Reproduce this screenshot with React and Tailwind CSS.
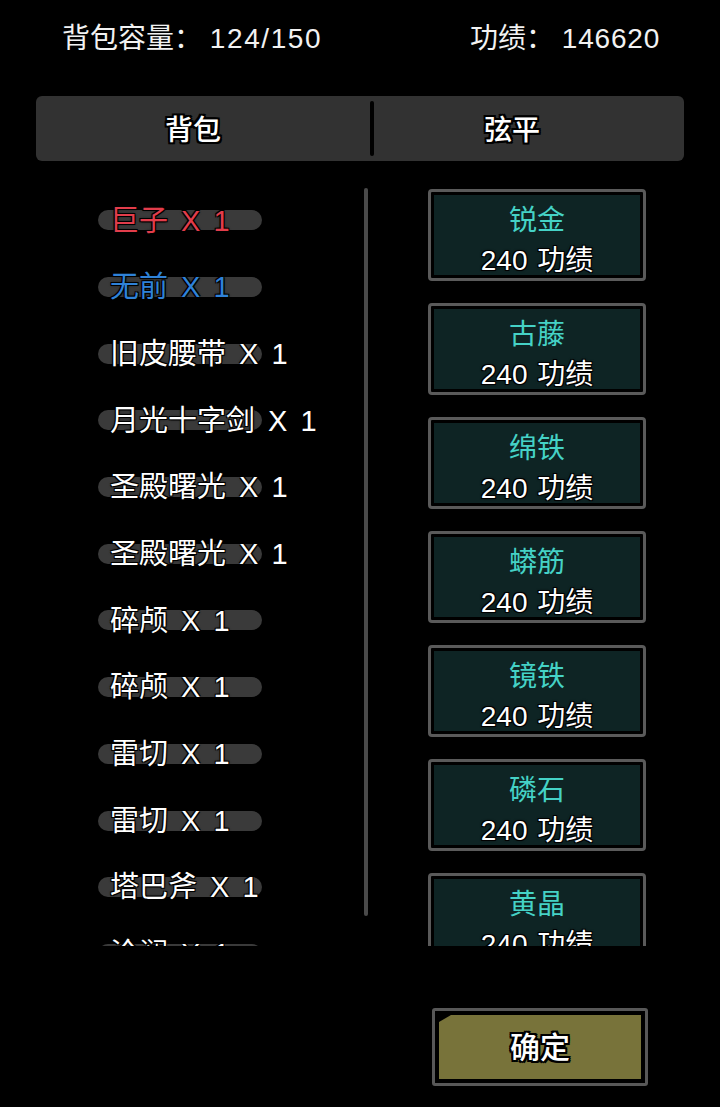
import React from "react";

const items = [
  { name: "巨子", color: "text-[#e23d4b]" },
  { name: "无前", color: "text-[#2f82d8]" },
  { name: "旧皮腰带", color: "text-white" },
  { name: "月光十字剑", color: "text-white" },
  { name: "圣殿曙光", color: "text-white" },
  { name: "圣殿曙光", color: "text-white" },
  { name: "碎颅", color: "text-white" },
  { name: "碎颅", color: "text-white" },
  { name: "雷切", color: "text-white" },
  { name: "雷切", color: "text-white" },
  { name: "塔巴斧", color: "text-white" },
  { name: "沧澜", color: "text-white" },
];

const shop = ["锐金", "古藤", "绵铁", "蟒筋", "镜铁", "磷石", "黄晶"];

const outline =
  "[text-shadow:-1px_-1px_0_#000,1px_-1px_0_#000,-1px_1px_0_#000,1px_1px_0_#000,0_0_3px_#000]";
const thickOutline =
  "[text-shadow:-2px_-2px_0_#000,2px_-2px_0_#000,-2px_2px_0_#000,2px_2px_0_#000,0_2px_0_#000,0_-2px_0_#000,2px_0_0_#000,-2px_0_0_#000]";

const App = () => {
  return (
    <div className="w-[720px] h-[1107px] bg-black overflow-hidden flex flex-col font-['Liberation_Sans','Noto_Sans_CJK_SC',sans-serif] text-white">
      {/* header */}
      <div className="h-[78px] flex items-center justify-between pl-[62px] pr-[60px] text-[28px] text-[#f2f2f2]">
        <span>
          背包容量： <span className="tracking-[1.6px]">124/150</span>
        </span>
        <span>
          功绩： <span className="tracking-[0.8px]">146620</span>
        </span>
      </div>

      {/* tabs */}
      <div className="mt-[18px] mx-[36px] h-[65px] bg-[#323232] rounded-[6px] flex items-center">
        <div className={`w-[314px] text-center text-[28px] font-medium pt-[5px] ${thickOutline}`}>
          背包
        </div>
        <div className="w-[20px]" />
        <div className="w-[4px] h-[55px] bg-black rounded-full" />
        <div className={`w-[276px] text-center text-[28px] font-medium pt-[5px] ${thickOutline}`}>
          弦平
        </div>
      </div>

      {/* content */}
      <div className="mt-[27px] h-[758px] flex overflow-hidden">
        <div className="w-[364px] flex flex-col">
          {items.map((it, i) => (
            <div key={i} className="relative h-[66.7px] shrink-0 flex items-center">
              <div className="absolute left-[98px] top-1/2 -translate-y-1/2 -mt-[1px] w-[164px] h-[20px] rounded-full bg-[#3a3a3a]" />
              <span
                className={`relative pl-[110px] text-[29px] whitespace-nowrap [word-spacing:5px] ${it.color} ${outline}`}
              >
                {it.name} X 1
              </span>
            </div>
          ))}
        </div>
        <div className="w-[4px] h-[728px] bg-[#4a4a4a] rounded-full self-start" />
        <div className="ml-[60px] w-[218px] pt-[1px] flex flex-col gap-[22px]">
          {shop.map((s, i) => (
            <div
              key={i}
              className="h-[92px] shrink-0 border-[3px] border-[#5a5a5a] rounded-[4px] bg-black p-[3px]"
            >
              <div className="h-full bg-[#0e2424] flex flex-col items-center pt-[9px] overflow-hidden">
                <div className="h-[34px] leading-[34px] text-[28px] text-[#45d2c6]">
                  {s}
                </div>
                <div
                  className={`mt-[6px] h-[34px] leading-[34px] text-[28px] text-white [word-spacing:2px] ${outline}`}
                >
                  240 功绩
                </div>
              </div>
            </div>
          ))}
        </div>
      </div>

      {/* confirm */}
      <div className="mt-[62px] pl-[432px]">
        <div className="w-[216px] h-[78px] border-[3px] border-[#585858] rounded-[3px] bg-black p-[4px]">
          <div className="h-full bg-[#78733a] [clip-path:polygon(12px_0,100%_0,100%_100%,0_100%,0_7px)] flex items-center justify-center">
            <span className={`text-[30px] font-medium ${thickOutline}`}>确定</span>
          </div>
        </div>
      </div>
    </div>
  );
};

export default App;
